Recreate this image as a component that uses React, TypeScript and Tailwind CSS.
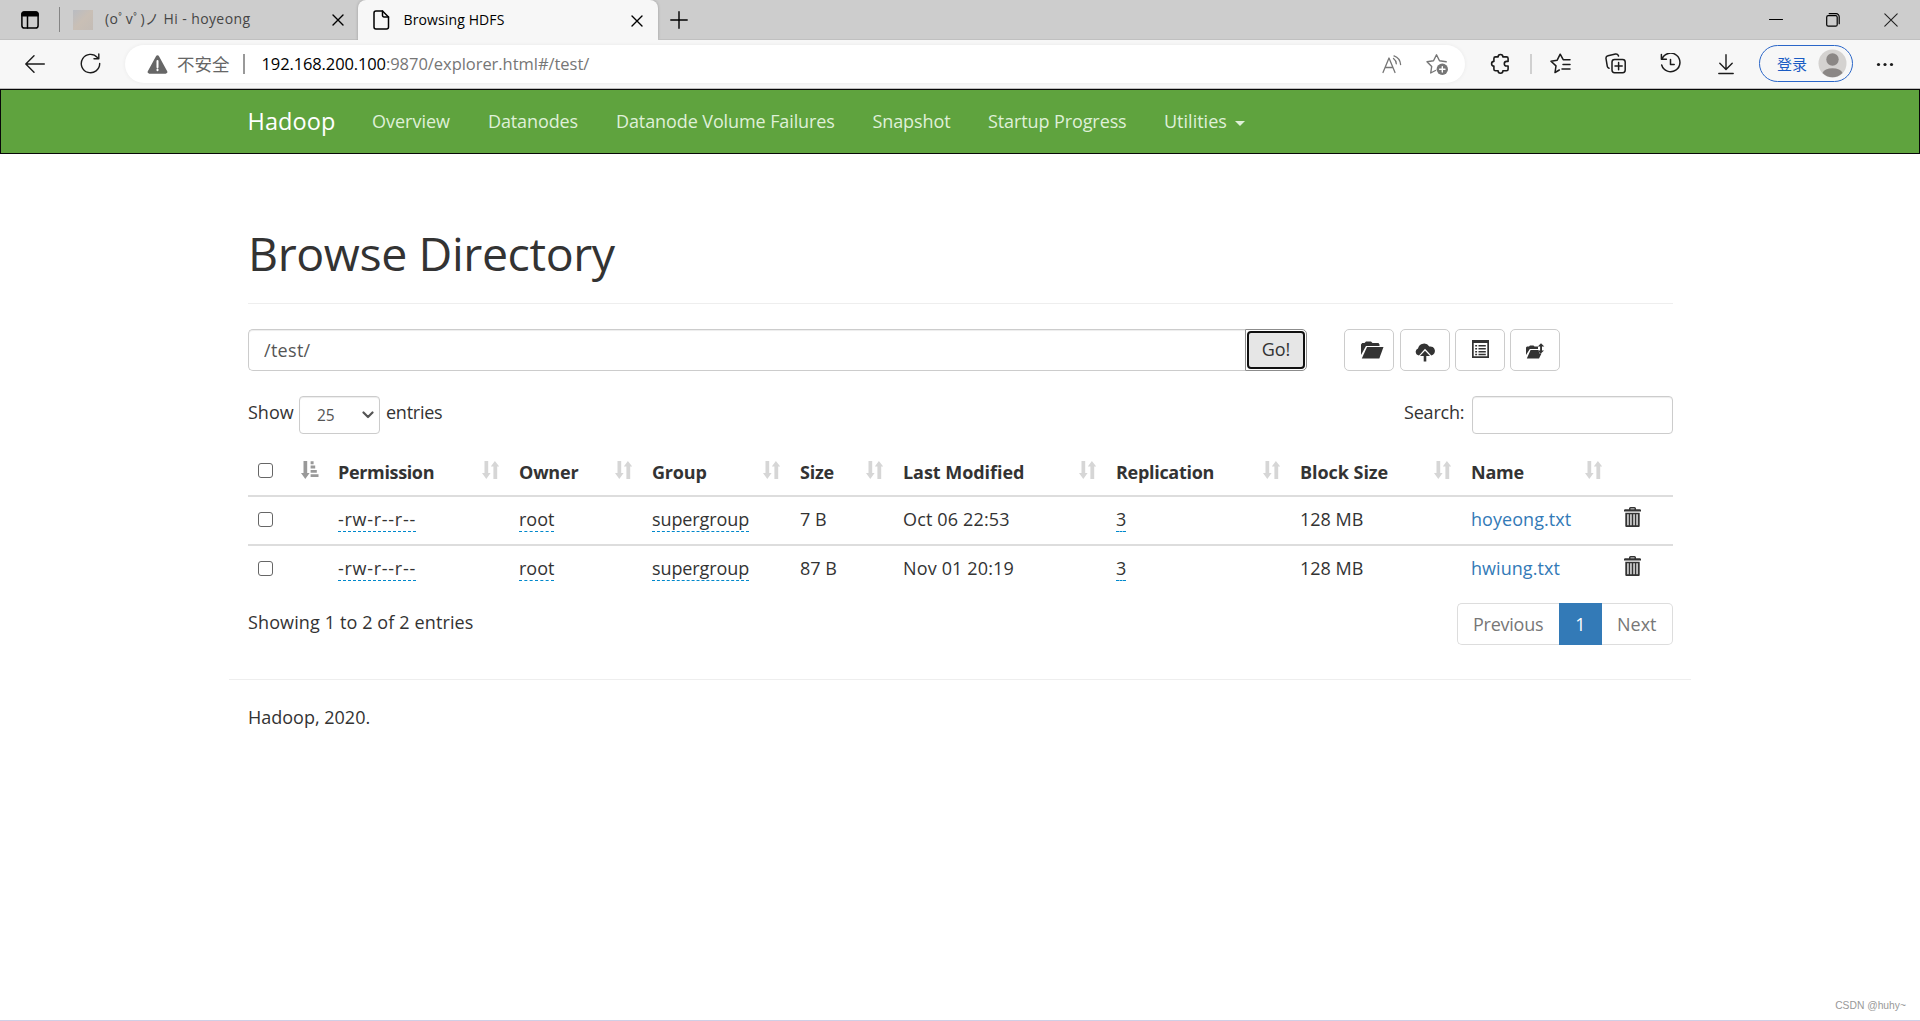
import type { JSX, ReactNode } from 'react'
import { clsx } from 'clsx'

interface NavLink {
  label: string
  className: string
}

interface Column {
  label: string
  className: string
}

interface FileEntry {
  permission: string
  owner: string
  group: string
  size: string
  modified: string
  replication: string
  blockSize: string
  name: string
}

const NAV_LINKS: NavLink[] = [
  { label: 'Overview', className: 'w-[116px]' },
  { label: 'Datanodes', className: 'w-32 tracking-[-0.12px]' },
  { label: 'Datanode Volume Failures', className: 'w-[256.5px] tracking-[-0.1px]' },
  { label: 'Snapshot', className: 'w-[115.5px] tracking-[-0.1px]' },
  { label: 'Startup Progress', className: 'w-44 tracking-[-0.1px]' }
]

const COLUMNS: Column[] = [
  { label: 'Permission', className: 'w-[181px] tracking-[-0.35px]' },
  { label: 'Owner', className: 'w-[133px] tracking-[-0.2px]' },
  { label: 'Group', className: 'w-[148px] tracking-[-0.2px]' },
  { label: 'Size', className: 'w-[103px] tracking-[-0.2px]' },
  { label: 'Last Modified', className: 'w-[213px] tracking-[-0.05px]' },
  { label: 'Replication', className: 'w-[184px] tracking-[-0.3px]' },
  { label: 'Block Size', className: 'w-[171px] tracking-[-0.05px]' },
  { label: 'Name', className: 'w-[151px] tracking-[-0.2px]' }
]

const FILES: FileEntry[] = [
  {
    permission: '-rw-r--r--',
    owner: 'root',
    group: 'supergroup',
    size: '7 B',
    modified: 'Oct 06 22:53',
    replication: '3',
    blockSize: '128 MB',
    name: 'hoyeong.txt'
  },
  {
    permission: '-rw-r--r--',
    owner: 'root',
    group: 'supergroup',
    size: '87 B',
    modified: 'Nov 01 20:19',
    replication: '3',
    blockSize: '128 MB',
    name: 'hwiung.txt'
  }
]

function Glyph(props: {
  width: number
  height: number
  className?: string
  line?: boolean
  strokeWidth?: number
  children: ReactNode
}): JSX.Element {
  const { width, height, className, line = false, strokeWidth = 1.4, children } = props
  return (
    <svg
      width={width}
      height={height}
      viewBox={`0 0 ${width} ${height}`}
      className={clsx('shrink-0', className)}
      fill={line ? 'none' : 'currentColor'}
      stroke={line ? 'currentColor' : 'none'}
      strokeWidth={strokeWidth}
      strokeLinecap="round"
      strokeLinejoin="round"
      aria-hidden="true"
    >
      {children}
    </svg>
  )
}

function CloseIcon({ className }: { className?: string }): JSX.Element {
  return (
    <Glyph width={12} height={12} line className={className}>
      <path d="M1 1l10 10M11 1 1 11" />
    </Glyph>
  )
}

function TabStrip(): JSX.Element {
  return (
    <div className="flex h-10 bg-[#cdcdcd] text-sm text-black">
      <div className="flex w-[358px] items-center border-b border-[#c0c0c0]">
        <Glyph width={18} height={18} line strokeWidth={1.5} className="ml-[21px]">
          <rect x="0.9" y="0.9" width="16.2" height="16.2" rx="2.6" />
          <path d="M1 2.8A2 2 0 0 1 2.8 1h12.4A2 2 0 0 1 17 2.8v2H1z" fill="currentColor" />
          <path d="M6.5 5v12" />
        </Glyph>
        <div className="ml-[19.5px] h-[25px] w-px bg-[#858585]" />
        <div className="ml-[13.5px] size-5 bg-linear-to-br from-[#b9bcc2] via-[#c9bfb5] to-[#c3bcb6]" />
        <span className="ml-3 w-[227px] pb-px text-[#454545] tracking-[0.4px]">
          (oﾟvﾟ)ノ Hi - hoyeong
        </span>
        <CloseIcon className="mt-px" />
      </div>
      <div className="flex w-[300px] items-center rounded-t-lg bg-[#f7f7f7] shadow-[0_0_3px_#00000040]">
        <Glyph width={17} height={20} line strokeWidth={1.5} className="ml-[14.5px]">
          <path d="M3 1h6.5L15.5 7v10a2 2 0 0 1-2 2H3a2 2 0 0 1-2-2V3a2 2 0 0 1 2-2z" />
          <path d="M9.5 1v4.5A1.5 1.5 0 0 0 11 7h4.5" />
        </Glyph>
        <span className="ml-3.5 w-[227px] pb-px tracking-[0.12px]">Browsing HDFS</span>
        <CloseIcon className="mt-px" />
      </div>
      <div className="flex flex-1 items-center border-b border-[#c0c0c0]">
        <Glyph width={18} height={18} line className="ml-3">
          <path d="M9 .8v16.4M.8 9h16.4" />
        </Glyph>
        <Glyph width={14} height={14} line strokeWidth={1.1} className="ml-auto">
          <path d="M.5 6.500h13" />
        </Glyph>
        <Glyph width={14} height={14} line strokeWidth={1.2} className="ml-[43px]">
          <rect x="0.7" y="2.7" width="10.5" height="10.5" rx="1.5" />
          <path d="M3.2.7h7a3 3 0 0 1 3 3v7" />
        </Glyph>
        <Glyph width={14} height={14} line strokeWidth={1.1} className="ml-[44px] mr-[22px] text-[#222]">
          <path d="M.8.8l12.4 12.4M13.2.8.8 13.2" />
        </Glyph>
      </div>
    </div>
  )
}

function AddressBar(): JSX.Element {
  return (
    <div className="flex h-[38px] w-[1340px] items-center rounded-full bg-white pl-[22px] text-[16.5px] shadow-[0_0_4px_#0000000f]">
      <Glyph width={21} height={19} className="text-[#666]">
        <path d="M9 1.2a1.7 1.7 0 0 1 3 0l8.2 15A1.7 1.7 0 0 1 18.7 18.7H2.3A1.7 1.7 0 0 1 .8 16.2z" />
        <path d="M10.5 6v6.2M10.5 14.6v.6" stroke="#fff" strokeWidth="2" />
      </Glyph>
      <span className="ml-[9px] w-[53px] text-[17.5px] text-[#666]">不安全</span>
      <div className="mx-[13px] h-5 w-0.5 bg-[#999]" />
      <span className="ml-[3.5px] text-black tracking-[-0.12px]">192.168.200.100</span>
      <span className="text-[#767676] tracking-[-0.04px]">:9870/explorer.html#/test/</span>
      <Glyph width={20} height={19} line strokeWidth={1.3} className="ml-auto text-[#767676]">
        <path d="M1 17.5 7 3l6 14.5M3 12.500h8" />
        <path d="M11.5 3.5a7 7 0 0 1 2.8 5.3M12 .9A10 10 0 0 1 18.6 9.5" />
      </Glyph>
      <Glyph width={24} height={23} line className="mr-[15px] ml-6 text-[#767676]">
        <path d="M9.5 17.5 4.700 20l1-6.500L1 8.800l6.500-1L10.500 1.800l3 6 6.700 1" />
        <circle cx="16.3" cy="16.3" r="5.7" fill="currentColor" stroke="none" />
        <path d="M16.3 13.6v5.4M13.6 16.3H19" stroke="#fff" />
      </Glyph>
    </div>
  )
}

function BrowserToolbar(): JSX.Element {
  return (
    <div className="flex h-[49px] items-center border-b border-[#bdbdbd] bg-[#f7f7f7] text-[#1b1b1b]">
      <Glyph width={20} height={18} line className="mb-px ml-[25px]">
        <path d="M9 .8.8 9 9 17.2M1 9h18.3" />
      </Glyph>
      <Glyph width={21} height={21} line className="mr-6 mb-px ml-[35px]">
        <path d="M19.7 10.5A9.2 9.2 0 1 1 17.4 4.5M18.8 1v4.8H14" />
      </Glyph>
      <AddressBar />
      <Glyph width={20} height={21} line strokeWidth={1.6} className="mb-px ml-[25px]">
        <path d="M5.5 3.9h2.6a2.4 2.4 0 0 1 4.8 0h3.6a1.6 1.6 0 0 1 1.6 1.6v2.9h-1.500a2.3 2.3 0 0 0 0 4.6h1.500v3.200a1.6 1.6 0 0 1-1.6 1.6h-3.600a2.400 2.400 0 0 1-4.800 0H5.500a1.6 1.6 0 0 1-1.6-1.6V13a2.3 2.3 0 0 1 0-4.600V5.500a1.6 1.6 0 0 1 1.6-1.6z" />
      </Glyph>
      <div className="ml-5 h-5 w-0.5 bg-[#d0d0d0]" />
      <Glyph width={21} height={21} line strokeWidth={1.5} className="mb-px ml-[18px]">
        <path d="M9.3 17 5 19.500l1-6.600L1 8.200l6.200-1L10.200 1.200l3 5.500h6.800M13 11.500h7M12 16h8" />
      </Glyph>
      <Glyph width={21} height={21} line strokeWidth={1.5} className="mb-px ml-[34px]">
        <path d="M4 15.2a2.5 2.5 0 0 1-1.7-1.9L1 5.5A2.5 2.5 0 0 1 3 2.7l7.5-1.6a2.5 2.5 0 0 1 3 1.9" />
        <rect x="7" y="6.5" width="13.2" height="13.2" rx="2.6" />
        <path d="M13.6 9.5v7.2M10 13.1h7.2" />
      </Glyph>
      <Glyph width={22} height={21} line strokeWidth={1.5} className="mb-px ml-[34px]">
        <path d="M1.4 1.5v4.8h5M2 6A9.3 9.3 0 1 1 1.7 12M10.5 6.5v5h3.7" />
      </Glyph>
      <Glyph width={16} height={21} line className="ml-9">
        <path d="M8 .8v14.4M1.8 9.3 8 15.5l6.2-6.2M.8 19.5h14.4" />
      </Glyph>
      <div className="mb-px ml-[25px] flex h-[37px] w-[94px] items-center rounded-full border-[1.5px] border-[#2a66c8] pl-[17px] text-[#1a5cc4]">
        <span className="w-[41px] text-[15px]">登录</span>
        <Glyph width={29} height={29}>
          <circle cx="14.5" cy="14.5" r="14" fill="#d4d2d0" />
          <circle cx="14.5" cy="10.5" r="6.2" fill="#8b8785" />
          <path d="M4.5 24a10.2 6 0 0 1 20 0 14 14 0 0 1-20 0z" fill="#8b8785" />
        </Glyph>
      </div>
      <Glyph width={18} height={5} className="ml-[23px]">
        <circle cx="2.5" cy="2.5" r="1.6" />
        <circle cx="9" cy="2.5" r="1.6" />
        <circle cx="15.5" cy="2.5" r="1.6" />
      </Glyph>
    </div>
  )
}

function Navbar(): JSX.Element {
  return (
    <nav className="flex h-[65px] items-center border border-[#080808] bg-[#5fa33e] pb-px pl-[246.5px] text-[#dff0d8]">
      <a className="w-[124.5px] text-[23.5px] tracking-[0.1px] text-white">Hadoop</a>
      {NAV_LINKS.map(({ label, className }) => (
        <a key={label} className={className}>
          {label}
        </a>
      ))}
      <a className="flex items-center">
        Utilities
        <span className="mt-1 ml-2 border-x-5 border-t-5 border-x-transparent border-t-[#dff0d8]" />
      </a>
    </nav>
  )
}

function ToolButton({ className, children }: { className?: string; children: ReactNode }): JSX.Element {
  return (
    <button
      type="button"
      className={clsx(
        'flex h-[42px] w-[50px] items-center justify-center rounded-[5px] border border-[#ccc] bg-white',
        className
      )}
    >
      {children}
    </button>
  )
}

function PathForm(): JSX.Element {
  return (
    <div className="flex h-[42px]">
      <input
        type="text"
        defaultValue="/test/"
        className="w-[997px] rounded-l-[5px] border border-r-0 border-[#ccc] pb-px pl-[15px] tracking-[0.3px] text-[#555] shadow-[inset_0_1px_1px_#00000013]"
      />
      <div className="w-[62px] rounded-r-[5px] border border-[#8c8c8c] p-px">
        <button
          type="button"
          className="h-full w-full rounded-[4px] border-2 border-[#101010] bg-[#e6e6e6] pb-0.5"
        >
          Go!
        </button>
      </div>
      <ToolButton className="ml-[37px]">
        <Glyph width={23} height={18} className="ml-1.5">
          <path d="M0 14V3.5L1.2 2h2.3L5 .5h5L11.5 2h6l1 1.5V5H5L0 14z" />
          <path d="M6 6h16.5l-4.2 11.5H.8z" />
        </Glyph>
      </ToolButton>
      <ToolButton className="ml-1.5">
        <Glyph width={20} height={19} className="mt-1">
          <path d="M4 12.5A3.7 3.7 0 0 1 3 5.4 6.2 6.2 0 0 1 14.3 3.5a4.6 4.6 0 0 1 2 9L10 5.8 4 12.5z" />
          <path d="M10 7.8l5 5.2h-3.7v5.5H8.7V13H5z" />
        </Glyph>
      </ToolButton>
      <ToolButton className="ml-[5px]">
        <Glyph width={17} height={18} className="mb-0.5">
          <path d="M0 0h17v18H0zM1.7 3v13.3h13.6V3z" fillRule="evenodd" />
          <path d="M3.2 5h1.9v1.6H3.2zM6.5 5h7.3v1.6H6.5zM3.2 8h1.9v1.6H3.2zM6.5 8h7.3v1.6H6.5zM3.2 11h1.9v1.6H3.2zM6.5 11h7.3v1.6H6.5zM3.2 13.8h1.9v1.4H3.2zM6.5 13.8h7.3v1.4H6.5z" />
        </Glyph>
      </ToolButton>
      <ToolButton className="ml-[5px]">
        <Glyph width={19} height={16} className="mt-0.5">
          <path d="M0 12V4.5L1 3.5h2l1-1h3.5l1 1H12V6H3.8z" />
          <path d="M4.6 7h7.6l1.3 3.5h2L13 15.5H.8z" />
          <path d="M15 .2l3.300 3.300h-2.300v4h2L14.600 10.800 11.600 7.500h2.500v-4h-2.300z" />
        </Glyph>
      </ToolButton>
    </div>
  )
}

function Checkbox({ label, className }: { label: string; className?: string }): JSX.Element {
  return (
    <input
      type="checkbox"
      aria-label={label}
      className={clsx('block size-[15px] appearance-none rounded-[3px] border border-[#666] bg-white', className)}
    />
  )
}

function SortIcon({ active = false }: { active?: boolean }): JSX.Element {
  return (
    <Glyph width={18} height={18} className={clsx('mb-0.5', active ? 'text-[#999]' : 'text-[#d6d6d6]')}>
      <path d="M2.5 0h3.7v12h2.400l-4.300 6L0 12h2.500z" />
      {active ? (
        <path d="M9.6.3h3v2.9h-3zM9.6 4.6h4.6v2.9H9.6zM9.6 8.9h6.2v2.9H9.6zM9.6 13.2h7.9v2.9H9.6z" />
      ) : (
        <path d="M12.9 0l4.3 5.5h-2V18h-3.800V5.500h-2.600z" />
      )}
    </Glyph>
  )
}

function Editable({ children, className }: { children: ReactNode; className?: string }): JSX.Element {
  return (
    <span className={clsx('inline-block h-[25px] border-b border-dashed border-[#08c]', className)}>
      {children}
    </span>
  )
}

function TrashIcon(): JSX.Element {
  return (
    <Glyph width={17} height={20}>
      <path
        d="M5 2.2V1.5A1.5 1.5 0 0 1 6.500 0h4A1.500 1.500 0 0 1 12 1.500v.7h4.200l.8.800v1.500H0V3l.8-.8zM6.500 2.200h4V1.400h-4z"
        fillRule="evenodd"
      />
      <path
        d="M1.3 5.7h14.4V19a1 1 0 0 1-1 1H2.3a1 1 0 0 1-1-1zM3.3 7.3v10.9h1.3V7.3zM6.3 7.3v10.9h1.3V7.3zM9.4 7.3v10.9h1.3V7.3zM12.4 7.3v10.9h1.3V7.3z"
        fillRule="evenodd"
      />
    </Glyph>
  )
}

function DirectoryTable(): JSX.Element {
  return (
    <table className="w-[1425px] table-fixed border-separate border-spacing-0 text-left">
      <thead>
        <tr className="h-[49px]">
          <th className="w-20 p-0 pl-2.5">
            <div className="flex items-center justify-between pr-[9px]">
              <Checkbox label="Select all" className="mb-px" />
              <SortIcon active />
            </div>
          </th>
          {COLUMNS.map(({ label, className }) => (
            <th key={label} className={clsx('p-0 pl-2.5 font-bold', className)}>
              <div className="flex items-center justify-between pr-[9px]">
                <span className="pt-[3px]">{label}</span>
                <SortIcon />
              </div>
            </th>
          ))}
          <th className="w-[61px] p-0" />
        </tr>
      </thead>
      <tbody>
        {FILES.map((file) => (
          <tr
            key={file.name}
            className="h-[49px] [&>td]:border-t-2 [&>td]:border-[#ddd] [&>td]:p-0 [&>td]:pt-2.5 [&>td]:pl-2.5 [&>td]:align-top"
          >
            <td>
              <Checkbox label={file.name} className="mt-[5px]" />
            </td>
            <td>
              <Editable className="tracking-[0.72px]">{file.permission}</Editable>
            </td>
            <td>
              <Editable>{file.owner}</Editable>
            </td>
            <td>
              <Editable className="tracking-[-0.1px]">{file.group}</Editable>
            </td>
            <td>{file.size}</td>
            <td className="tracking-[0.15px]">{file.modified}</td>
            <td>
              <Editable>{file.replication}</Editable>
            </td>
            <td>{file.blockSize}</td>
            <td className="tracking-[0.05px] text-[#337ab7]">{file.name}</td>
            <td>
              <div className="pl-0.5">
                <TrashIcon />
              </div>
            </td>
          </tr>
        ))}
      </tbody>
    </table>
  )
}

function Pagination(): JSX.Element {
  return (
    <div className="flex h-[42px] text-[#777]">
      <span className="flex w-[102px] items-center rounded-l-[5px] border border-r-0 border-[#ddd] pl-[15px] tracking-[-0.25px]">
        Previous
      </span>
      <span className="flex w-[43px] items-center justify-center bg-[#337ab7] text-white">1</span>
      <span className="flex w-[71px] items-center rounded-r-[5px] border border-l-0 border-[#ddd] pl-[15px]">
        Next
      </span>
    </div>
  )
}

export default function App(): JSX.Element {
  return (
    <div className="flex h-[1021px] w-[1920px] flex-col overflow-hidden border-b border-[#cfcfe6] bg-white font-['Open_Sans','Noto_Sans_CJK_SC',sans-serif] text-[18px] leading-6 text-[#333]">
      <TabStrip />
      <BrowserToolbar />
      <Navbar />
      <main className="mx-auto w-[1462px] pt-[69px] pr-[18px] pl-[19px]">
        <h1 className="flex h-[81px] items-start border-b border-[#eee] text-[46.5px] leading-[60px] tracking-[-0.4px]">
          Browse Directory
        </h1>
        <div className="mt-[25px]">
          <PathForm />
        </div>
        <div className="mt-[25px] flex h-[38px] items-start justify-between">
          <div className="flex">
            <span className="mt-1 w-[51px]">Show</span>
            <div className="flex h-[38px] w-[81px] items-center justify-between rounded-[4px] border border-[#ccc] pr-[5px] pl-[17px] text-[15.5px] text-[#555] shadow-[inset_0_1px_1px_#00000013]">
              <span>25</span>
              <Glyph width={12} height={8} line strokeWidth={2.2}>
                <path d="M1.5 1.5 6 6l4.5-4.5" />
              </Glyph>
            </div>
            <span className="mt-1 ml-1.5 tracking-[-0.25px]">entries</span>
          </div>
          <div className="flex">
            <span className="mt-1 w-[68px] tracking-[-0.2px]">Search:</span>
            <input
              type="text"
              className="h-[38px] w-[201px] rounded-[4px] border border-[#ccc] shadow-[inset_0_1px_1px_#00000013]"
            />
          </div>
        </div>
        <div className="mt-3">
          <DirectoryTable />
        </div>
        <div className="mt-2.5 flex items-start justify-between">
          <span className="mt-[7px] tracking-[0.12px]">Showing 1 to 2 of 2 entries</span>
          <Pagination />
        </div>
      </main>
      <footer className="mx-auto mt-[34px] w-[1462px] border-t border-[#eee] px-[19px] pt-[25px]">
        Hadoop, 2020.
      </footer>
      <div className="mt-auto mr-3.5 mb-1.5 self-end font-['Liberation_Sans',sans-serif] text-[10.3px] leading-4 text-[#999]">
        CSDN @huhy~
      </div>
    </div>
  )
}
